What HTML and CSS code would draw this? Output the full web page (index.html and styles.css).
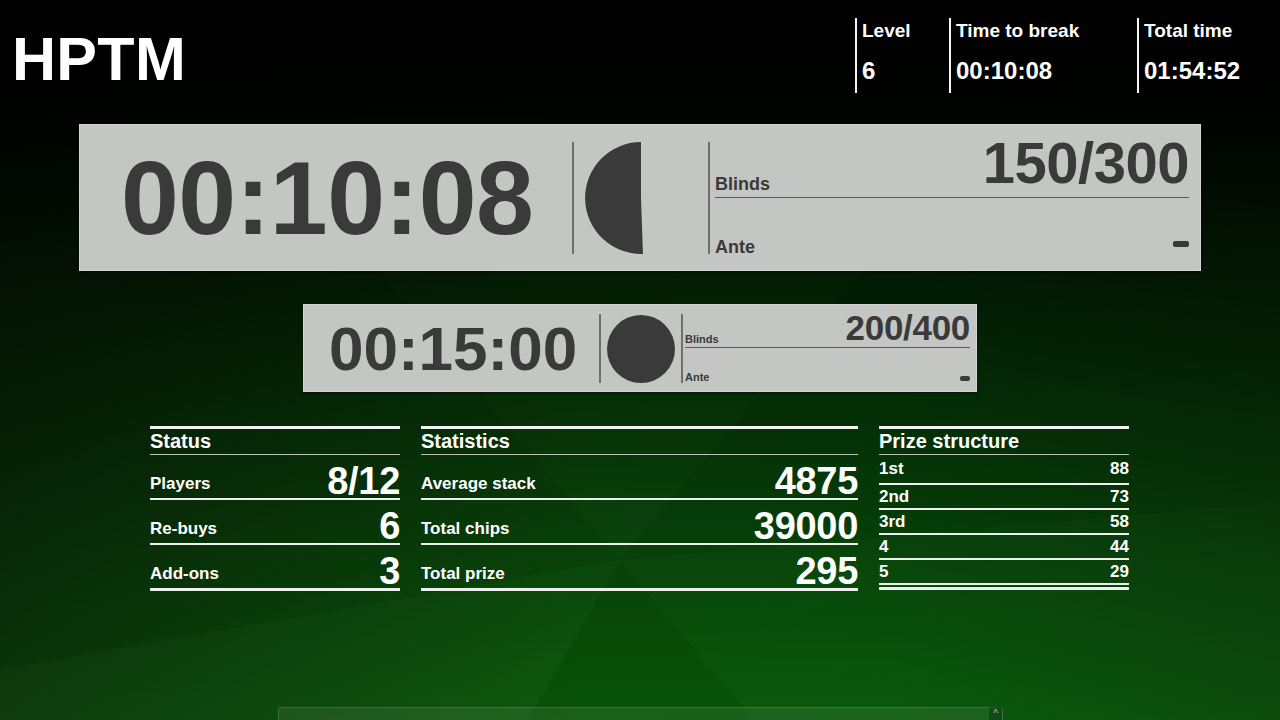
FILE: index.html
```html
<!DOCTYPE html>
<html>
<head>
<meta charset="utf-8">
<title>HPTM</title>
<link rel="stylesheet" href="styles.css">
</head>
<body>
<div class="screen">
  <header class="top">
    <div class="logo">HPTM</div>
    <div class="info">
      <div class="info-col c1"><div class="info-label">Level</div><div class="info-value">6</div></div>
      <div class="info-col c2"><div class="info-label">Time to break</div><div class="info-value">00:10:08</div></div>
      <div class="info-col c3"><div class="info-label">Total time</div><div class="info-value">01:54:52</div></div>
    </div>
  </header>

  <section class="panel big">
    <div class="timer">00:10:08</div>
    <div class="vdiv"></div>
    <div class="pie">
      <svg width="114" height="114" viewBox="0 0 114 114"><path d="M57 57 L57 1 A56 56 0 1 0 58.95 112.97 Z" fill="#3a3a3a"/></svg>
    </div>
    <div class="vdiv"></div>
    <div class="blinds">
      <div class="brow btop"><span class="blabel">Blinds</span><span class="bvalue">150/300</span></div>
      <div class="brow bbot"><span class="blabel">Ante</span><span class="dash"></span></div>
    </div>
  </section>

  <section class="panel small">
    <div class="timer">00:15:00</div>
    <div class="vdiv"></div>
    <div class="pie">
      <svg width="68" height="68" viewBox="0 0 68 68"><circle cx="34" cy="34" r="34" fill="#3a3a3a"/></svg>
    </div>
    <div class="vdiv"></div>
    <div class="blinds">
      <div class="brow btop"><span class="blabel">Blinds</span><span class="bvalue">200/400</span></div>
      <div class="brow bbot"><span class="blabel">Ante</span><span class="dash"></span></div>
    </div>
  </section>

  <section class="stats">
    <div class="table status">
      <div class="thead">Status</div>
      <div class="trow"><span class="tlabel">Players</span><span class="tvalue">8/12</span></div>
      <div class="trow"><span class="tlabel">Re-buys</span><span class="tvalue">6</span></div>
      <div class="trow"><span class="tlabel">Add-ons</span><span class="tvalue">3</span></div>
    </div>
    <div class="table statistics">
      <div class="thead">Statistics</div>
      <div class="trow"><span class="tlabel">Average stack</span><span class="tvalue">4875</span></div>
      <div class="trow"><span class="tlabel">Total chips</span><span class="tvalue">39000</span></div>
      <div class="trow"><span class="tlabel">Total prize</span><span class="tvalue">295</span></div>
    </div>
    <div class="table prize">
      <div class="thead">Prize structure</div>
      <div class="prow first"><span>1st</span><span>88</span></div>
      <div class="prow"><span>2nd</span><span>73</span></div>
      <div class="prow"><span>3rd</span><span>58</span></div>
      <div class="prow"><span>4</span><span>44</span></div>
      <div class="prow last"><span>5</span><span>29</span></div>
    </div>
  </section>
</div>
<div class="drawer"><span class="drawer-tab">^</span></div>
</body>
</html>
```
FILE: styles.css
```css
* { box-sizing: border-box; }
html, body { margin: 0; padding: 0; }
body {
  width: 1280px;
  height: 720px;
  overflow: hidden;
  position: relative;
  font-family: "Liberation Sans", Arial, sans-serif;
  font-weight: bold;
  color: #fff;
  background:
    linear-gradient(180deg, #000 0px, rgba(0,0,0,0.97) 110px, rgba(0,0,0,0.72) 260px, rgba(0,0,0,0.45) 420px, rgba(0,0,0,0.2) 580px, rgba(0,0,0,0) 720px),
    conic-gradient(from 10deg at 620px 560px, rgba(255,255,255,0.015) 0deg 30deg, rgba(0,0,0,0.04) 30deg 75deg, rgba(255,255,255,0.01) 75deg 130deg, rgba(0,0,0,0.05) 130deg 200deg, rgba(255,255,255,0.015) 200deg 250deg, rgba(0,0,0,0.03) 250deg 310deg, rgba(255,255,255,0.01) 310deg 360deg),
    linear-gradient(90deg, #0a380a 0%, #0a580a 45%, #07580a 70%, #0a4a0a 100%);
}
.screen { width: 1280px; }

/* header */
.top {
  height: 124px;
  display: flex;
  justify-content: space-between;
  align-items: flex-start;
}
.logo {
  margin-top: 29px;
  padding-left: 12px;
  font-size: 61px;
  line-height: 60px;
  letter-spacing: 0.3px;
  color: #fff;
}
.info {
  display: flex;
  padding-top: 18px;
}
.info-col {
  height: 75px;
  border-left: 2px solid #f4f4f4;
  padding-left: 5px;
}
.c1 { width: 94px; }
.c2 { width: 188px; }
.c3 { width: 143px; }
.info-label {
  font-size: 19px;
  line-height: 26px;
  height: 40px;
}
.info-value {
  font-size: 24px;
  line-height: 26px;
}

/* panels */
.panel {
  display: flex;
  align-items: stretch;
  background: #c4c6c3;
  color: #3a3a3a;
  border: 1px solid #d4d6d3;
  box-shadow: 0 1px 2px rgba(0,0,0,0.5);
}
.panel.big {
  margin: 0 79px;
  height: 147px;
  padding: 17px 11px 16px 41px;
}
.panel.small {
  width: 674px;
  height: 88px;
  margin: 33px auto 0 303px;
  padding: 9px 6px 8px 25px;
}
.timer {
  display: flex;
  align-items: center;
}
.big .timer { flex: 0 0 451px; font-size: 104px; line-height: 104px; letter-spacing: -0.5px; }
.small .timer { flex: 0 0 270px; font-size: 62px; line-height: 62px; letter-spacing: 0; }
.vdiv {
  width: 2px;
  background: #6e706e;
}
.pie {
  display: flex;
  align-items: center;
  justify-content: center;
}
.big .pie { flex: 0 0 134px; }
.small .pie { flex: 0 0 80px; }
.blinds {
  flex: 1;
  display: flex;
  flex-direction: column;
}
.big .blinds { padding-left: 5px; }
.small .blinds { padding-left: 2px; }
.brow {
  display: flex;
  justify-content: space-between;
  align-items: flex-end;
}
.btop { border-bottom: 1px solid #5a5c5a; }
.big .btop { height: 56px; }
.big .bbot { flex: 1; }
.small .btop { height: 34px; }
.small .bbot { flex: 1; }
.big .blabel { font-size: 18px; line-height: 18px; margin-bottom: 4px; }
.big .bbot .blabel { margin-bottom: -2px; }
.big .bvalue { font-size: 58px; line-height: 44px; margin-bottom: 12px; letter-spacing: -0.5px; }
.small .blabel { font-size: 11px; line-height: 11px; margin-bottom: 2px; }
.small .bbot .blabel { margin-bottom: 0; }
.small .bvalue { font-size: 35px; line-height: 28px; margin-bottom: 5px; letter-spacing: -0.3px; }
.dash {
  display: block;
  background: #3a3a3a;
  border-radius: 2px;
}
.big .dash { width: 16px; height: 6px; margin-bottom: 7px; }
.small .dash { width: 10px; height: 5px; margin-bottom: 2px; }

/* stats */
.stats {
  display: flex;
  gap: 21px;
  margin-top: 34px;
  padding-left: 150px;
  align-items: flex-start;
}
.table { border-top: 3px solid #f2f2f2; }
.status { width: 250px; }
.statistics { width: 437px; }
.prize { width: 250px; }
.thead {
  height: 26px;
  line-height: 25px;
  font-size: 20px;
  border-bottom: 1px solid rgba(255,255,255,0.72);
}
.trow {
  height: 45px;
  display: flex;
  justify-content: space-between;
  align-items: flex-end;
  border-bottom: 2px solid #eef0ee;
}
.trow:last-child { border-bottom-width: 3px; height: 46px; }
.tlabel { font-size: 17px; line-height: 17px; margin-bottom: 6px; }
.tvalue { font-size: 38px; line-height: 30px; margin-bottom: 2px; letter-spacing: -0.3px; }
.prow {
  height: 25px;
  line-height: 23px;
  font-size: 17px;
  display: flex;
  justify-content: space-between;
  border-bottom: 2px solid #eef0ee;
}
.prow.first { height: 30px; line-height: 28px; }
.prize { border-bottom: 3px solid #eef0ee; padding-bottom: 2px; }

/* bottom drawer */
.drawer {
  position: absolute;
  left: 278px;
  bottom: 0;
  width: 725px;
  height: 13px;
  background: rgba(255,255,255,0.07);
  border: 1px solid rgba(255,255,255,0.12);
  border-bottom: none;
  border-radius: 3px 3px 0 0;
}
.drawer-tab {
  position: absolute;
  right: 0;
  top: -1px;
  width: 13px;
  height: 13px;
  background: rgba(0,0,0,0.25);
  color: #b8c0b8;
  font-size: 10px;
  line-height: 14px;
  text-align: center;
  font-weight: normal;
}
```
